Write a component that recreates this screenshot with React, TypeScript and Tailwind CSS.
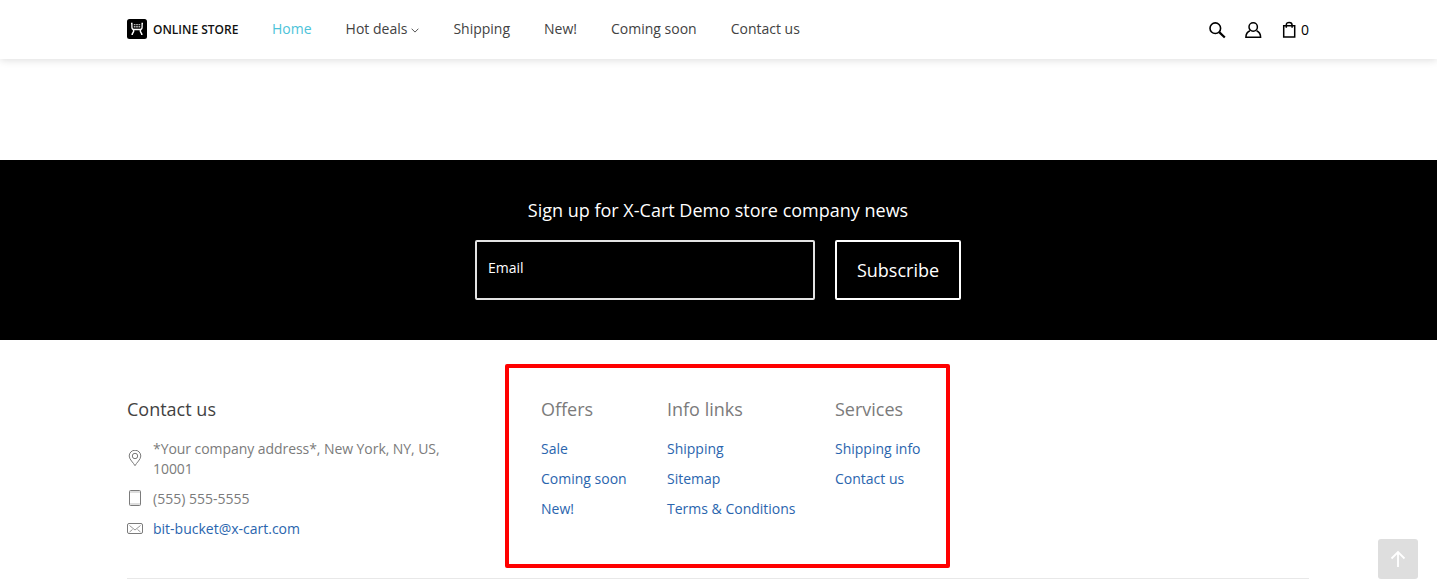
import React from "react";

const nav = ["Shipping", "New!", "Coming soon", "Contact us"];

function Logo() {
  return (
    <svg width="20" height="20" viewBox="0 0 20 20" className="shrink-0">
      <rect width="20" height="20" rx="2.5" fill="#000" />
      <g fill="none" stroke="#fff">
        <path d="M4 4.500h.9v3.700c0 1.500.8 2.300 2.200 2.300h5.800c1.400 0 2.200-.8 2.200-2.300V4.500h.9" strokeWidth="1.300" />
        <path d="M6.600 10.700v1.600c-.2 1.300-1.400 1.600-1.500 3.700M13.400 10.700v1.600c.2 1.300 1.400 1.600 1.500 3.700" strokeWidth="1.500" />
      </g>
      <g fill="#fff" fillOpacity=".7">
        <path d="M6.800 4.900h1.700v1.400H6.800zM9.150 4.900h1.700v1.400h-1.700zM11.500 4.900h1.700v1.400h-1.700zM6.800 7h1.700v1.400H6.800zM9.150 7h1.700v1.400h-1.700zM11.500 7h1.700v1.400h-1.700z" />
      </g>
    </svg>
  );
}

function LinkColumn({ title, links, className }: { title: string; links: string[]; className: string }) {
  return (
    <div className={className}>
      <h3 className="text-[18px] leading-[26px] text-[#7b7b7b]">{title}</h3>
      <ul className="mt-[17px] flex flex-col gap-[10px] text-[#2a65ae]">
        {links.map((l) => (
          <li key={l} className="leading-5"><a href="#">{l}</a></li>
        ))}
      </ul>
    </div>
  );
}

export default function App() {
  return (
    <div className="flex h-[583px] flex-col overflow-hidden bg-white font-['Open_Sans','Noto_Sans',sans-serif] text-[14px] leading-5 whitespace-nowrap">
      <header className="relative flex h-[59px] shrink-0 items-start bg-white pl-[127px] shadow-[0_1px_8px_rgba(0,0,0,0.14)]">
        <a href="#" className="mt-[19px] flex h-5 w-[145px] items-start gap-[6px] text-[12px] leading-5 font-semibold text-[#111]">
          <Logo />
          <span className="pt-px">ONLINE STORE</span>
        </a>
        <nav className="mt-[19px] flex gap-[34px] text-[#424242]">
          <a href="#" className="text-[#4cc3d9]">Home</a>
          <a href="#" className="flex items-center gap-[4px]">
            Hot deals
            <svg width="8" height="5" viewBox="0 0 8 5" fill="none" stroke="#555" strokeWidth="1" className="mt-[2px]"><path d="M.6.700 4 4.100 7.400.700" /></svg>
          </a>
          {nav.map((n) => <a key={n} href="#">{n}</a>)}
        </nav>
        <div className="mt-[20px] mr-[128px] ml-auto flex items-center text-black">
          <svg width="18" height="18" viewBox="0 0 18 18" fill="none" stroke="#000" className="mr-[18px]">
            <circle cx="6.300" cy="7.200" r="5.300" strokeWidth="1.600" /><path d="m10.200 11.100 5.600 5.400" strokeWidth="2.200" />
          </svg>
          <svg width="18" height="18" viewBox="0 0 18 18" fill="none" stroke="#000" strokeWidth="1.500" className="mr-[19px]">
            <circle cx="8.200" cy="6" r="4.200" /><path d="M4.900 9.700c-2.500 1.200-4 3.300-4 6.500h14.700c0-3.200-1.500-5.300-4-6.500" />
          </svg>
          <svg width="14" height="18" viewBox="0 0 14 18" fill="none" stroke="#000" strokeWidth="1.500" className="mr-[5px]">
            <path d="M1.700 4.800h11v11.200h-11z" /><path d="M4.300 6.800V4C4.300 2.200 5.400 1.400 7.200 1.400s2.900.8 2.900 2.600v2.800" />
          </svg>
          <span>0</span>
        </div>
      </header>

      <section className="mt-[101px] flex h-[180px] shrink-0 flex-col items-center bg-black pr-px text-white">
        <h2 className="mt-[37px] text-[18px] leading-[26px]">Sign up for X-Cart Demo store company news</h2>
        <form className="mt-[17px] flex gap-5">
          <div className="flex h-[60px] w-[340px] rounded-[2px] border-2 border-[#e3e3e3] pt-4 pl-[11px]">Email</div>
          <button type="button" className="h-[60px] w-[126px] rounded-[2px] border-2 border-white text-[18px]">Subscribe</button>
        </form>
      </section>

      <footer className="ml-[127px] flex h-[239px] w-[1182px] shrink-0 items-start border-b border-[#e8e8e8]">
        <div className="mt-[56px] w-[378px] text-[#7b7b7b]">
          <h3 className="text-[18px] leading-[26px] text-[#424242]">Contact us</h3>
          <ul className="mt-[17px] flex flex-col gap-[10px]">
            <li className="flex items-center gap-[10px]">
              <svg width="16" height="18" viewBox="0 0 16 18" fill="none" stroke="#7b7b7b" className="shrink-0">
                <path d="M8 15.700C6.500 12.700 2.200 9.500 2.200 6a5.800 5.800 0 0 1 11.600 0C13.800 9.500 9.500 12.700 8 15.700Z" /><circle cx="8" cy="6" r="2.700" />
              </svg>
              <span className="w-[300px] tracking-[-0.06px] whitespace-normal">*Your company address*, New York, NY, US, 10001</span>
            </li>
            <li className="flex items-center gap-[10px]">
              <svg width="16" height="18" viewBox="0 0 16 18" fill="none" stroke="#7b7b7b" className="shrink-0">
                <rect x="2.500" y=".5" width="11" height="15" rx="1" /><path d="M2.500 2h11M2.500 14h11" strokeOpacity=".5" />
              </svg>
              (555) 555-5555
            </li>
            <li className="flex items-center gap-[10px] text-[#2a65ae]">
              <svg width="16" height="12" viewBox="0 0 16 12" fill="none" stroke="#7b7b7b" className="shrink-0">
                <rect x=".5" y=".5" width="15" height="10" rx="1.500" /><path d="m2.500 2.500 5.500 4.500 5.500-4.500M2.500 9l3-2.500M13.500 9l-3-2.500" strokeWidth=".8" />
              </svg>
              <a href="#">bit-bucket@x-cart.com</a>
            </li>
          </ul>
        </div>
        <div className="mt-6 flex h-[204px] w-[445px] rounded-[2px] border-4 border-[#ff0000] pt-7 pl-8">
          <LinkColumn className="w-[126px]" title="Offers" links={["Sale", "Coming soon", "New!"]} />
          <LinkColumn className="w-[168px]" title="Info links" links={["Shipping", "Sitemap", "Terms & Conditions"]} />
          <LinkColumn className="w-[100px]" title="Services" links={["Shipping info", "Contact us"]} />
        </div>
      </footer>

      <button type="button" aria-label="Back to top" className="fixed top-[539px] left-[1378px] flex size-10 items-center justify-center rounded-[3px] bg-[#dedede]">
        <svg width="16" height="18" viewBox="0 0 16 18" fill="none" stroke="#fff" strokeWidth="1.800"><path d="M8 17V2M1.500 8.500 8 2l6.500 6.500" /></svg>
      </button>
    </div>
  );
}
